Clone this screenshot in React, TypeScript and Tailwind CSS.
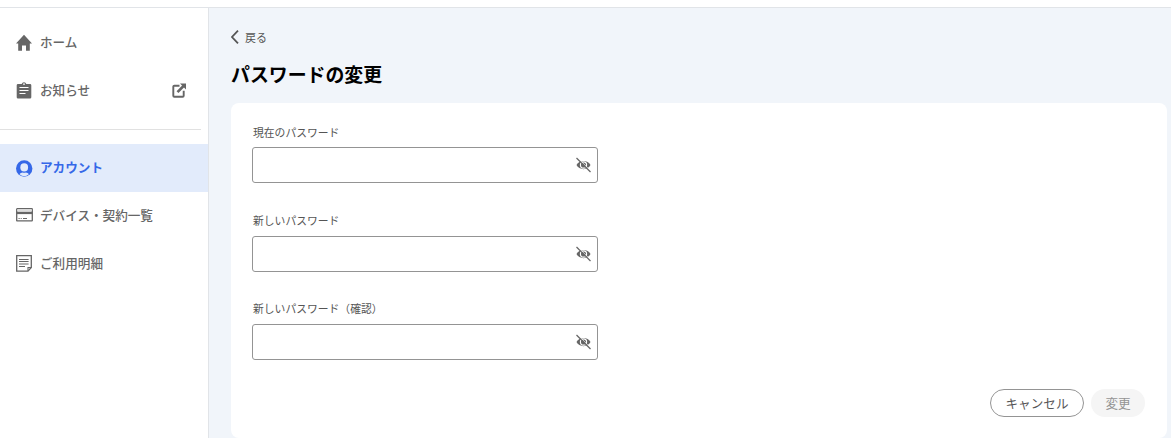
import React from 'react';

const HomeIcon = () => (
  <svg width="16" height="18" viewBox="0 0 16 18" fill="#666">
    <path d="M8 1.800 16 10.400h-2.200V17.800H10V12.600H6v5.200H2.200V10.400H0z" />
  </svg>
);

const NoticeIcon = () => (
  <svg width="16" height="18" viewBox="0 -1 16 18">
    <path
      d="M2 1.900h3.700a2.400 2.400 0 0 1 4.600 0H14a1.300 1.300 0 0 1 1.300 1.300v12A1.300 1.300 0 0 1 14 16.500H2a1.300 1.300 0 0 1-1.300-1.300v-12A1.300 1.300 0 0 1 2 1.900z"
      fill="#666"
    />
    <circle cx="8" cy="2.1" r="0.9" fill="#fff" />
    <path d="M3.500 5.500h9M3.500 8.500h9M3.500 11.500h6" stroke="#fff" strokeWidth="1.200" />
  </svg>
);

const AccountIcon = () => (
  <svg width="17" height="17" viewBox="0.300 0 17 17">
    <circle cx="8.5" cy="8.5" r="8.2" fill="#3568e8" />
    <ellipse cx="8.5" cy="7.400" rx="3.900" ry="4.100" fill="#e2ebfb" />
    <path d="M3.800 14.300c.8-1.300 1.900-1.700 3-1.900 1.100.5 2.300.5 3.400 0 1.100.2 2.200.6 3 1.900a7.400 7.400 0 0 1-9.400 0z" fill="#e2ebfb" />
  </svg>
);

const CardIcon = () => (
  <svg width="17" height="14" viewBox="0 0 17 14" fill="none">
    <rect x="0.700" y="0.700" width="15.600" height="12.200" rx="0.500" stroke="#666" strokeWidth="1.300" />
    <path d="M1.300 2.200h14.400" stroke="#ddd" strokeWidth="1.600" />
    <path d="M0.500 4.900h16" stroke="#666" strokeWidth="2.400" />
    <path d="M2.500 10.500h1.200M4.700 10.500h1M7 10.500h4" stroke="#666" strokeWidth="1.100" />
  </svg>
);

const BillIcon = () => (
  <svg width="17" height="17" viewBox="0 0 17 17" fill="none" stroke="#666">
    <path d="M0.700 0.700h14.600v11.800l-3.300 3.600H0.700z" strokeWidth="1.300" />
    <path d="M12 16v-3.500h3.300" strokeWidth="1.100" />
    <path d="M3 4.500h9.600M3 6.500h9.600M3 9h9.600M3 11.500h6" strokeWidth="1.100" />
  </svg>
);

const ExternalIcon = () => (
  <svg width="15" height="15" viewBox="0 0 15 15" fill="none" stroke="#666">
    <path d="M7.500 2.700H2.300a1 1 0 0 0-1 1v9a1 1 0 0 0 1 1h8.400a1 1 0 0 0 1-1V7.800" strokeWidth="1.900" />
    <path d="M5.500 9.200 11.500 3" strokeWidth="2.600" />
    <path d="M8 .5h6V6.500z" fill="#666" stroke="none" />
  </svg>
);

const EyeOffIcon = () => (
  <svg width="15" height="16" viewBox="0 -0.500 15 16" fill="none" stroke="#666">
    <path d="M.5 7.500C3 2 12 2 14.500 7.500 12 13 3 13 .5 7.500z" fill="#666" stroke="none" />
    <circle cx="7.500" cy="7.500" r="3.100" stroke="#fff" strokeWidth="1.100" />
    <path d="M1.500.1 15 13.600" stroke="#fff" strokeWidth="0.700" />
    <path d="M.5.500 14.500 14.500" strokeWidth="1.200" />
  </svg>
);

interface NavItemProps {
  icon: React.ReactNode;
  label: string;
  active?: boolean;
  external?: boolean;
}

const NavItem: React.FC<NavItemProps> = ({ icon, label, active, external }) => (
  <a
    href="#"
    className={`flex h-12 items-center pl-4 pr-[21px] text-[12.6px] ${
      active ? 'bg-[#e2ebfb] font-bold text-[#3568e8]' : 'font-medium text-[#666]'
    }`}
  >
    <span className="flex w-[17px] shrink-0 justify-start">{icon}</span>
    <span className={active ? 'ml-[7px] pb-0.5' : 'ml-[7px]'}>{label}</span>
    {external && <span className="ml-auto"><ExternalIcon /></span>}
  </a>
);

const PasswordField = ({ label }: { label: string }) => (
  <div>
    <label className="block h-[18px] pl-px text-[10.8px] leading-[18px] text-[#555]">{label}</label>
    <div className="mt-[6.4px] flex h-9 w-[346px] items-center rounded-[3px] border border-[#949494] bg-white pr-[6px]">
      <input type="password" className="min-w-0 flex-1 px-3 outline-none" />
      <button type="button"><EyeOffIcon /></button>
    </div>
  </div>
);

const fields = ['現在のパスワード', '新しいパスワード', '新しいパスワード（確認）'];

const App: React.FC = () => {
  return (
    <div className="flex h-[438px] flex-col overflow-hidden bg-white font-['Noto_Sans_CJK_JP',sans-serif]">
      <header className="h-2 shrink-0 border-b border-[#e1e4e8]" />
      <div className="flex flex-1">
        <nav className="w-[209px] shrink-0 border-r border-[#e1e4e8] pt-[10px]">
          <NavItem icon={<HomeIcon />} label="ホーム" />
          <NavItem icon={<NoticeIcon />} label="お知らせ" external />
          <div className="mb-[14px] mr-[7px] mt-[15px] h-px bg-[#e1e1e1]" />
          <NavItem icon={<AccountIcon />} label="アカウント" active />
          <div className="-mt-px">
            <NavItem icon={<CardIcon />} label="デバイス・契約一覧" />
            <NavItem icon={<BillIcon />} label="ご利用明細" />
          </div>
        </nav>

        <main className="flex-1 bg-[#f1f5fa] pl-[22px] pr-1 pt-[19px]">
          <a href="#" className="flex h-5 items-center text-[11px] text-[#555]">
            <svg width="8" height="14" viewBox="0 0 8 14" fill="none" stroke="#555" strokeWidth="1.800">
              <path d="M7 .7 1 7l6 6.300" />
            </svg>
            <span className="ml-[6px]">戻る</span>
          </a>
          <h1 className="mt-[13px] h-7 text-[18.9px] font-bold leading-7 text-black">パスワードの変更</h1>

          {/* Password form */}
          <form className="mt-[15px] flex h-[335px] flex-col rounded-lg bg-white px-[21px] pt-5">
            <div className="flex flex-col gap-[27.8px]">
              {fields.map((label) => (
                <PasswordField key={label} label={label} />
              ))}
            </div>
            <div className="mt-[29.2px] flex justify-end gap-[7px] pr-px text-[12.6px]">
              <button type="button" className="h-7 w-[94px] rounded-full border border-[#949494] text-[#555]">
                キャンセル
              </button>
              <button type="submit" disabled className="h-7 w-[54px] rounded-full bg-[#f5f5f5] text-[#949494]">
                変更
              </button>
            </div>
          </form>
        </main>
      </div>
    </div>
  );
};

export default App;
